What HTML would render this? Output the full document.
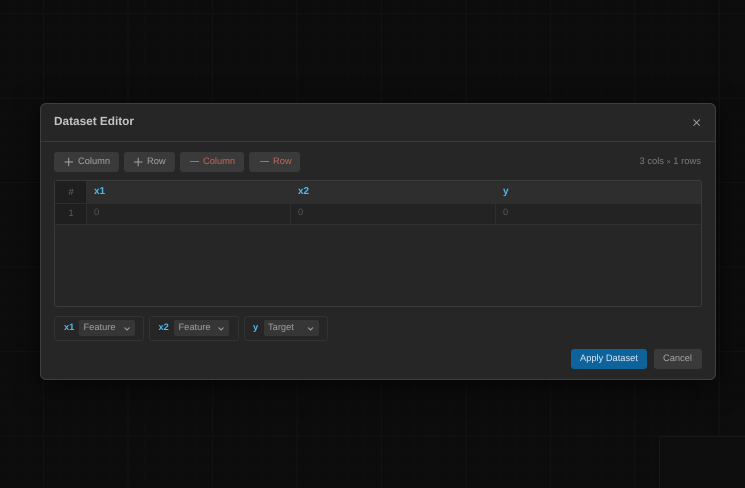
<!DOCTYPE html>
<html><head><meta charset="utf-8">
<style>
html,body{margin:0;padding:0;width:745px;height:488px;overflow:hidden;background:#0c0c0c;font-family:"Liberation Sans",sans-serif;text-rendering:geometricPrecision}
#root{position:absolute;left:0;top:0;width:745px;height:488px;overflow:hidden}
.a{position:absolute;box-sizing:border-box}
.t{position:absolute;white-space:nowrap;line-height:12px}
#bg{left:0;top:0;width:745px;height:488px;
background-color:#0c0c0c;
background-image:
linear-gradient(#121212 1px,transparent 1px),linear-gradient(90deg,#121212 1px,transparent 1px),
linear-gradient(#0e0e0e 1px,transparent 1px),linear-gradient(90deg,#0e0e0e 1px,transparent 1px);
background-size:84.5px 84.5px,84.5px 84.5px,16.9px 16.9px,16.9px 16.9px;
background-position:0 13px,43px 0,0 13px,43px 0}
.btn{background:#3a3a3a;border-radius:3px;height:20px;top:152px}
.sel{background:#363636;border-radius:2px;height:16px;top:320px}
.chip{border:1px solid #333;border-radius:3px;height:25px;top:316px}
.lb{color:#4db8f0;font-weight:bold;font-size:9.3px}
.g{color:#a0a0a0;font-size:9.3px}
.r{color:#c4665a;font-size:9.3px;top:155px}
.w{color:#a4a4a4;font-size:9.3px;top:155px}
</style></head><body>
<div id="root">
<div class="a" id="bg"></div>
<div class="a" style="left:659px;top:436px;width:90px;height:52px;background:#0e0e0e;border:1px solid #181818;border-bottom:0;border-radius:3px 3px 0 0"></div>
<div class="a" style="left:40px;top:103px;width:676px;height:277px;background:#262626;border:1px solid #3f3f3f;border-radius:6px;box-shadow:0 6px 28px rgba(0,0,0,.6)"></div>
<div class="a" style="left:41px;top:141px;width:674px;height:1px;background:#3a3a3a"></div>
<div class="t" style="left:54px;top:115px;font-size:11.8px;font-weight:bold;color:#c4c4c4">Dataset Editor</div>
<svg class="a" style="left:692px;top:118px" width="10" height="10" viewBox="0 0 10 10"><path d="M1.500 1.500L7.700 7.700M7.700 1.500L1.500 7.700" stroke="#a0a0a0" stroke-width="1" fill="none"/></svg>

<div class="a btn" style="left:54px;width:65px"></div>
<div class="a btn" style="left:124px;width:51px"></div>
<div class="a btn" style="left:180px;width:64px"></div>
<div class="a btn" style="left:249px;width:51px"></div>
<svg class="a" style="left:0;top:0" width="745" height="488"><path d="M64.500 162H73M68.700 157.700V166.300M134 162H142.500M138.200 157.700V166.300" stroke="#a4a4a4" stroke-width="1" fill="none"/><path d="M190 161.500H199M260 161.500H269" stroke="#c4665a" stroke-width="1" fill="none"/></svg>
<div class="t w" style="left:78px">Column</div>
<div class="t w" style="left:147px">Row</div>
<div class="t r" style="left:203px">Column</div>
<div class="t r" style="left:273px">Row</div>
<div class="t" style="left:639.500px;top:155px;font-size:9.4px;color:#7c7c7c">3 cols <span style="font-size:7px">×</span> 1 rows</div>

<div class="a" style="left:54px;top:180px;width:648px;height:127px;background:#262626;border:1px solid #3a3a3a;border-radius:3px"></div>
<div class="a" style="left:55px;top:181px;width:646px;height:23px;background:#2e2e2e"></div>
<div class="a" style="left:55px;top:204px;width:646px;height:20px;background:#232323"></div>
<div class="a" style="left:55px;top:224px;width:646px;height:1px;background:#303030"></div>
<div class="a" style="left:55px;top:181px;width:31px;height:43px;background:#1f1f1f"></div>
<div class="a" style="left:86px;top:181px;width:1px;height:43px;background:#2e2e2e"></div>
<div class="a" style="left:55px;top:203px;width:31px;height:1px;background:#2e2e2e"></div>
<div class="a" style="left:290px;top:204px;width:1px;height:20px;background:#2e2e2e"></div>
<div class="a" style="left:495px;top:204px;width:1px;height:20px;background:#2e2e2e"></div>
<div class="t" style="left:68.500px;top:186px;font-size:9.3px;color:#666">#</div>
<div class="t" style="left:68.500px;top:207px;font-size:9.3px;color:#5a5a5a">1</div>
<div class="t lb" style="left:94px;top:186px;font-size:10px">x1</div>
<div class="t lb" style="left:298px;top:186px;font-size:10px">x2</div>
<div class="t lb" style="left:503px;top:186px;font-size:10px">y</div>
<div class="t" style="left:94px;top:206px;font-size:9.3px;color:#555">0</div>
<div class="t" style="left:298px;top:206px;font-size:9.3px;color:#555">0</div>
<div class="t" style="left:503px;top:206px;font-size:9.3px;color:#555">0</div>

<div class="a chip" style="left:54px;width:90px"></div>
<div class="a chip" style="left:149px;width:90px"></div>
<div class="a chip" style="left:244px;width:84px"></div>
<div class="a sel" style="left:79px;width:56px"></div>
<div class="a sel" style="left:174px;width:55px"></div>
<div class="a sel" style="left:264px;width:55px"></div>
<div class="t lb" style="left:64px;top:321px">x1</div>
<div class="t lb" style="left:158.500px;top:321px">x2</div>
<div class="t lb" style="left:253px;top:321px">y</div>
<div class="t g" style="left:83.500px;top:321px">Feature</div>
<div class="t g" style="left:178.500px;top:321px">Feature</div>
<div class="t g" style="left:268px;top:321px">Target</div>
<svg class="a" style="left:0;top:0" width="745" height="488"><path d="M124.500 327.500L127 330L129.500 327.500M218.500 327.500L221 330L223.500 327.500M308 327.500L310.500 330L313 327.500" stroke="#a0a0a0" stroke-width="1" fill="none"/></svg>

<div class="a" style="left:571px;top:349px;width:76px;height:20px;background:#0e639c;border-radius:3px"></div>
<div class="a" style="left:654px;top:349px;width:48px;height:20px;background:#3a3a3a;border-radius:3px"></div>
<div class="t" style="left:580px;top:352px;font-size:9.3px;color:#d4e4f0">Apply Dataset</div>
<div class="t" style="left:663px;top:352px;font-size:9.3px;color:#a4a4a4">Cancel</div>
</div>
</body></html>
